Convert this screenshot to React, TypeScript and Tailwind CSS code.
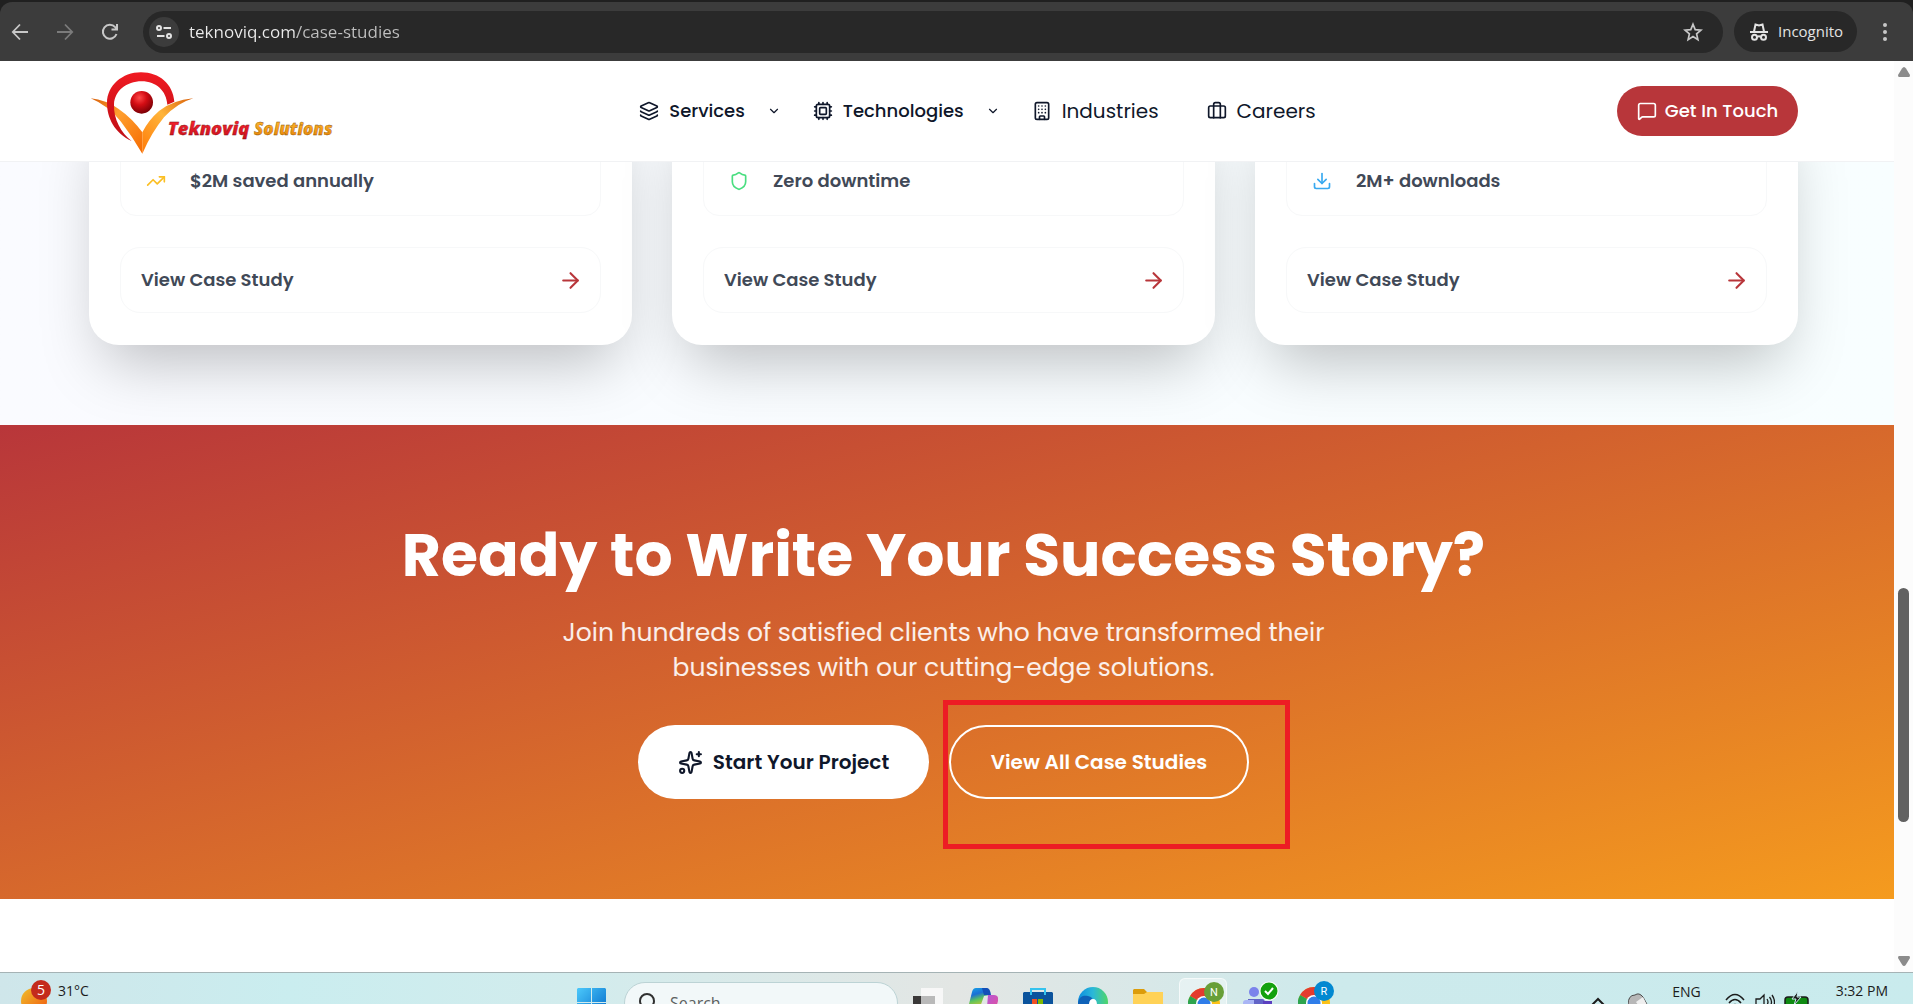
import type { ReactNode } from "react";
import {
  ArrowRight,
  Briefcase,
  Building,
  ChevronDown,
  Cpu,
  Download,
  Layers,
  MessageSquare,
  Shield,
  Sparkles,
  TrendingUp,
  type LucideIcon,
} from "lucide-react";

function BrowserBar() {
  return (
    <div className="shrink-0 bg-[#202020] pt-[2px] font-['Open_Sans','Noto_Sans',sans-serif]">
      <div className="flex h-[59px] items-center rounded-t-xl bg-[#3c3c3c] text-[#c7c7c7]">
        <button aria-label="Back" className="ml-2 grid size-6 place-items-center">
          <svg width="18" height="18" viewBox="0 0 18 18" fill="none" stroke="currentColor" strokeWidth="1.800">
            <path d="M17 9H2M9 1.500L1.800 9L9 16.500" />
          </svg>
        </button>
        <button aria-label="Forward" className="ml-[21px] grid size-6 place-items-center text-[#7b7b7b]">
          <svg width="18" height="18" viewBox="0 0 18 18" fill="none" stroke="currentColor" strokeWidth="1.800">
            <path d="M1 9h15M9 1.500L16.200 9L9 16.500" />
          </svg>
        </button>
        <button aria-label="Reload" className="ml-[21px] grid size-6 place-items-center">
          <svg width="18" height="18" viewBox="0 0 18 18" fill="none" stroke="currentColor" strokeWidth="2">
            <path d="M15.500 11A7 7 0 1 1 14.200 4.200L16 6.200M16 1v5.500h-5.500" />
          </svg>
        </button>
        <div className="ml-[21px] flex h-[42px] flex-1 items-center rounded-full bg-[#282828] pr-5 pl-[6px]">
          <button aria-label="Site information" className="grid size-[30px] place-items-center rounded-full bg-[#3c3c3c] text-[#e3e3e3]">
            <svg width="16" height="16" viewBox="0 0 16 16" fill="none" stroke="currentColor" strokeWidth="2">
              <circle cx="3" cy="4" r="2" />
              <path d="M7.500 4H15M1 12h7.500" />
              <circle cx="13" cy="12" r="2" />
            </svg>
          </button>
          <input
            aria-label="Address"
            defaultValue="teknoviq.com/case-studies"
            className="ml-[10px] flex-1 bg-[linear-gradient(to_right,#ededed_108px,#c0c0c0_108px)] bg-clip-text text-[17px] text-transparent outline-none"
          />
          <button aria-label="Bookmark this page">
            <svg width="20" height="20" viewBox="0 0 20 20" fill="none" stroke="currentColor" strokeWidth="1.700">
              <path d="M10 2.200l2.200 5.400 5.800.5-4.400 3.800 1.300 5.700L10 14.600l-4.900 3 1.300-5.700L2 8.100l5.800-.5z" />
            </svg>
          </button>
        </div>
        <div className="ml-[11px] flex h-[41px] w-[123px] items-center gap-[10px] rounded-full bg-[#282828] pl-4 text-[15px] text-[#e3e3e3]">
          <svg width="18" height="18" viewBox="0 0 18 18" fill="none" stroke="currentColor" strokeWidth="2">
            <path d="M0 9h18M4 8.500l1.500-7 3.500 1 3.500-1 1.500 7M7 14q2-1.500 4 0" />
            <circle cx="4.500" cy="14.300" r="2.500" />
            <circle cx="13.500" cy="14.300" r="2.500" />
          </svg>
          Incognito
        </div>
        <button aria-label="Browser menu" className="mr-[18px] ml-[18px] grid size-5 place-items-center">
          <svg width="4" height="18" viewBox="0 0 4 18" fill="currentColor">
            <circle cx="2" cy="2" r="2" />
            <circle cx="2" cy="9" r="2" />
            <circle cx="2" cy="16" r="2" />
          </svg>
        </button>
      </div>
    </div>
  );
}

function Logo() {
  return (
    <svg width="245" height="85" viewBox="30 26 735 255" role="img" aria-label="Teknoviq Solutions">
      <defs>
        <linearGradient id="ring" x1="0" y1="0" x2="0" y2="1">
          <stop offset="0" stopColor="#f01a22" />
          <stop offset="0.6" stopColor="#cf1219" />
          <stop offset="1" stopColor="#c01018" />
        </linearGradient>
        <linearGradient id="wing" x1="0" y1="0" x2="1" y2="1">
          <stop offset="0" stopColor="#d9600a" />
          <stop offset="0.4" stopColor="#ffa030" />
          <stop offset="1" stopColor="#f56a00" />
        </linearGradient>
        <linearGradient id="wingRight" x1="1" y1="0" x2="0" y2="1">
          <stop offset="0" stopColor="#d9600a" />
          <stop offset="0.45" stopColor="#ffb53a" />
          <stop offset="1" stopColor="#ff7a08" />
        </linearGradient>
        <radialGradient id="ball" cx="0.4" cy="0.3" r="0.7">
          <stop offset="0" stopColor="#ff4a4a" />
          <stop offset="0.45" stopColor="#d40d14" />
          <stop offset="1" stopColor="#7c0006" />
        </radialGradient>
        <linearGradient id="redText" x1="0" y1="0" x2="0" y2="1">
          <stop offset="0.3" stopColor="#f3202c" />
          <stop offset="1" stopColor="#c4101c" />
        </linearGradient>
        <linearGradient id="goldText" x1="0" y1="0" x2="0" y2="1">
          <stop offset="0.2" stopColor="#ffb52a" />
          <stop offset="1" stopColor="#e07a00" />
        </linearGradient>
      </defs>
      <path d="M35 114Q80 119 118 145Q160 174 190 216V280Q160 228 126 184Q88 136 35 114Z" fill="url(#wing)" />
      <path d="M343 114Q280 120 240 152Q208 180 190 216V280Q218 216 255 171Q295 128 343 114Z" fill="url(#wingRight)" />
      <path d="M158 242C106 218 84 172 84 128C84 76 130 36 186 36C242 36 282 72 286 124L265 133C262 92 232 63 188 63C142 63 107 92 105 132C103 176 126 218 158 242Z" fill="url(#ring)" />
      <circle cx="188" cy="126" r="34" fill="url(#ball)" />
      <g fontFamily="'Open Sans', sans-serif" fontWeight="800" fontStyle="italic">
        <text x="266" y="224" fontSize="55" fill="url(#redText)" stroke="#7a1016" strokeWidth="1">Teknoviq</text>
        <text x="525" y="224" fontSize="51" fill="url(#goldText)" stroke="#7d4808" strokeWidth="1">Solutions</text>
      </g>
    </svg>
  );
}

function MenuItem({ icon: Icon, label }: { icon: LucideIcon; label: string }) {
  return (
    <button className="flex items-center text-lg font-medium">
      <Icon size={20} className="mr-[10px]" />
      {label}
      <ChevronDown size={14} className="ml-[22px]" />
    </button>
  );
}

function SiteHeader() {
  return (
    <header className="relative z-10 border-b border-[#f1f2f4] bg-white pr-[7px]">
      <div className="mx-auto flex h-[100px] max-w-[1709px] items-center justify-between text-[#0f172a]">
        <a href="#home"><Logo /></a>
        <nav className="ml-1 flex items-center gap-8">
          <MenuItem icon={Layers} label="Services" />
          <MenuItem icon={Cpu} label="Technologies" />
          <a href="#industries" className="flex items-center gap-[10px] text-xl">
            <Building size={20} />Industries
          </a>
          <a href="#careers" className="ml-4 flex items-center gap-[10px] text-xl">
            <Briefcase size={20} />Careers
          </a>
        </nav>
        <a href="#contact" className="flex h-[50px] w-[181px] items-center justify-center gap-2 rounded-full bg-[#b8363a] text-lg font-medium text-white">
          <MessageSquare size={20} />Get In Touch
        </a>
      </div>
    </header>
  );
}

const studies: { icon: LucideIcon; color: string; result: string }[] = [
  { icon: TrendingUp, color: "text-[#fbbf24]", result: "$2M saved annually" },
  { icon: Shield, color: "text-[#4ade80]", result: "Zero downtime" },
  { icon: Download, color: "text-[#38a9f0]", result: "2M+ downloads" },
];

function CaseStudies() {
  return (
    <section className="overflow-hidden bg-linear-to-r from-[#fafbff] to-[#f8feff] pr-[7px] pb-20">
      <div className="mx-auto -mt-16 grid max-w-[1709px] grid-cols-3 gap-10">
        {studies.map(({ icon: Icon, color, result }) => (
          <article key={result} className="rounded-[30px] bg-white px-[31px] pt-12 pb-8 text-lg font-semibold text-[#414957] shadow-[0_31px_62px_-15px_rgba(0,0,0,0.25)]">
            <div className="flex h-[70px] items-center gap-6 rounded-2xl border border-[#f7f8f9] px-[25px]">
              <Icon size={20} className={color} />
              {result}
            </div>
            <a href="#case-study" className="mt-[31px] flex h-[66px] items-center justify-between rounded-[20px] border border-[#f7f8f9] pr-[17px] pl-5">
              View Case Study
              <ArrowRight size={25} className="text-[#b8363a]" />
            </a>
          </article>
        ))}
      </div>
    </section>
  );
}

function CallToAction() {
  return (
    <section className="bg-linear-to-br/srgb from-[#b8363a] to-[#f59b1e] pt-[98px] pr-[7px] pb-[100px] text-center text-white">
      <h2 className="text-[60px] leading-[64px] font-bold">Ready to Write Your Success Story?</h2>
      <p className="mx-auto mt-7 max-w-[800px] text-[25px] leading-[35px] text-white/90">
        Join hundreds of satisfied clients who have transformed their businesses with our cutting-edge solutions.
      </p>
      <div className="mt-10 flex justify-center gap-5 text-xl font-semibold">
        <a href="#start" className="flex h-[74px] w-[291px] items-center justify-center gap-[10px] rounded-full bg-white text-[#0f172a]">
          <Sparkles size={25} />Start Your Project
        </a>
        <div className="relative">
          <a href="#all" className="flex h-[74px] w-[300px] items-center justify-center rounded-full border-2 border-white">
            View All Case Studies
          </a>
          <div className="pointer-events-none absolute -top-[25px] -left-[6px] h-[149px] w-[347px] border-5 border-[#ed1c24]" />
        </div>
      </div>
    </section>
  );
}

function Scrollbar() {
  return (
    <div className="flex w-[19px] shrink-0 flex-col items-center bg-[#fcfcfc] py-[6px]">
      <svg width="12" height="10" viewBox="0 0 12 10" fill="#8b8b8b"><path d="M6 0Q7 0 8 1.500L12 8Q12 10 11 10H1Q0 10 0 8L4 1.500Q5 0 6 0Z" /></svg>
      <div className="grow-[511]" />
      <div className="w-[11px] grow-[234] rounded-full bg-[#616161]" />
      <div className="grow-[134]" />
      <svg width="12" height="10" viewBox="0 0 12 10" fill="#8b8b8b"><path d="M6 10Q5 10 4 8.500L0 2Q0 0 1 0H11Q12 0 12 2L8 8.500Q7 10 6 10Z" /></svg>
    </div>
  );
}

function ChromeIcon({ letter, color }: { letter: string; color: string }) {
  return (
    <svg width="38" height="44" viewBox="0 0 38 44">
      <circle cx="16" cy="24" r="16" fill="#fbc116" />
      <path d="M16 24L2.100 16A16 16 0 0 1 29.900 16Z" fill="#e33b2e" />
      <path d="M16 24L2.100 16A16 16 0 0 0 16 40Z" fill="#2da44e" />
      <circle cx="16" cy="24" r="8" fill="#fff" />
      <circle cx="16" cy="24" r="6.500" fill="#2f7de9" />
      <circle cx="26" cy="12" r="10" fill={color} />
      <text x="26" y="16" textAnchor="middle" fontSize="11" fill="#fff" fontFamily="Roboto, sans-serif">{letter}</text>
    </svg>
  );
}

function TaskButton({ label, children }: { label: string; children: ReactNode }) {
  return <button aria-label={label} className="mt-[15px] shrink-0 self-start">{children}</button>;
}

function Taskbar() {
  return (
    <footer className="grid h-[32px] shrink-0 grid-cols-[1fr_auto_1fr] overflow-hidden border-t border-[#a5b3b5] bg-[#cfeaec] font-['Open_Sans','Noto_Sans',sans-serif] text-sm text-[#1b1b1b]">
      <div className="flex h-16 bg-linear-to-r from-[#cfe6ea] via-[#caedef] to-[#d2eced] pl-[21px]">
        <svg width="31" height="60" viewBox="0 0 31 60">
          <defs>
            <linearGradient id="sun" x1="0" y1="0" x2="1" y2="1">
              <stop offset="0" stopColor="#f0c02c" />
              <stop offset="1" stopColor="#f0540e" />
            </linearGradient>
          </defs>
          <circle cx="13" cy="28" r="13" fill="url(#sun)" />
          <circle cx="20" cy="17" r="10" fill="#c42b1c" />
          <text x="20" y="22" textAnchor="middle" fontSize="14" fill="#fff">5</text>
        </svg>
        <span className="mt-2 ml-[6px] leading-5">31°C</span>
      </div>
      <div className="flex h-16 bg-linear-to-r from-[#d2eced] via-[#e3e6e4] to-[#cdeaec]">
        <TaskButton label="Start">
          <svg width="29" height="29" viewBox="0 0 29 29">
            <defs>
              <linearGradient id="win" x1="0" y1="0" x2="1" y2="1">
                <stop offset="0" stopColor="#4cc9fb" />
                <stop offset="1" stopColor="#0067c8" />
              </linearGradient>
            </defs>
            <path fill="url(#win)" d="M1 0h13v14H0V1zM15 0h13l1 1v13H15zM0 15h14v14H0zM15 15h14v14H15z" />
          </svg>
        </TaskButton>
        <label className="mt-[9px] ml-[18px] flex h-[42px] w-[274px] items-center gap-[14px] rounded-full border border-[#bcd3d5] bg-[#f2f8f9] pl-[13px]">
          <svg width="18" height="20" viewBox="0 0 18 20" fill="none" stroke="#303030" strokeWidth="2"><circle cx="9" cy="8" r="7" /><path d="M4 13L0 18" /></svg>
          <input aria-label="Search" placeholder="Search" className="w-40 bg-transparent text-base outline-none placeholder:text-[#5c6060]" />
        </label>
        <div className="ml-[15px]">
          <TaskButton label="Task view">
            <svg width="30" height="28" viewBox="0 0 30 28"><path fill="#3a3838" d="M0 8h22v20H0z" /><path fill="#f7f7f7" d="M8 0h22v22H8z" /><path fill="#b9b9b9" d="M8 8h14v14H8z" /></svg>
          </TaskButton>
        </div>
        <div className="ml-[25px]">
          <TaskButton label="Copilot">
            <svg width="30" height="28" viewBox="0 0 30 28">
              <defs>
                <linearGradient id="copA" x1="0" y1="0" x2="0.300" y2="1"><stop offset="0" stopColor="#16a7e8" /><stop offset="0.35" stopColor="#1a6fd6" /><stop offset="0.6" stopColor="#5cc45b" /><stop offset="1" stopColor="#f2c52c" /></linearGradient>
                <linearGradient id="copB" x1="0" y1="0" x2="1" y2="1"><stop offset="0" stopColor="#a758e8" /><stop offset="1" stopColor="#f0508c" /></linearGradient>
              </defs>
              <path d="M8 0h10q3 0 4 7l-6 1-5 14H4Q-1 22 1 16L4 4Q5 0 8 0Z" fill="url(#copA)" />
              <path d="M14 0h5q3 0 4 7h-7Q15 4 14 0Z" fill="#134fb8" />
              <path d="M20 7h6q5 0 4 6l-3 11q-1 4-5 4h-9q5-1 6-9Z" fill="url(#copB)" />
            </svg>
          </TaskButton>
        </div>
        <div className="ml-[25px]">
          <TaskButton label="Store">
            <svg width="30" height="28" viewBox="0 0 30 28"><path d="M8 7V1h14v6" fill="none" stroke="#35c3ee" strokeWidth="2" /><path fill="#0b539c" d="M1 4h28l1 1v23H0V5z" /><path fill="#35c3ee" d="M7 4h2v3H7zM21 4h2v3h-2z" /><path fill="#f25022" d="M9 11h5v5H9z" /><path fill="#7fba00" d="M15 11h5v5h-5z" /></svg>
          </TaskButton>
        </div>
        <div className="-mt-px ml-[25px]">
          <TaskButton label="Edge">
            <svg width="30" height="30" viewBox="0 0 30 30">
              <defs><linearGradient id="edge"><stop offset="0" stopColor="#0c8ee0" /><stop offset="0.5" stopColor="#2bb8d8" /><stop offset="1" stopColor="#50d668" /></linearGradient></defs>
              <circle cx="15" cy="15" r="15" fill="url(#edge)" />
              <path d="M0 16C1 9 6 8 10 9q5 1 5 5-4 0-5 7l1 8Q1 26 0 16Z" fill="#0f62b8" />
              <path d="M11 18q0-6 4-6t4 6Z" fill="#fff" />
            </svg>
          </TaskButton>
        </div>
        <div className="ml-[25px]">
          <TaskButton label="File Explorer">
            <svg width="30" height="28" viewBox="0 0 30 28"><path fill="#dc9c0a" d="M0 2l1-1h10l3 3h15v6H0z" /><path fill="#ffd257" d="M0 6h11l3-2h16v24H0z" /></svg>
          </TaskButton>
        </div>
        <button aria-label="Chrome, profile N" className="mt-[5px] ml-4 h-12 w-12 rounded-md border border-white/60 bg-white/40 pl-2">
          <ChromeIcon letter="N" color="#689f38" />
        </button>
        <button aria-label="Teams" className="mt-[6px] ml-4 h-11">
          <svg width="36" height="44" viewBox="0 0 36 44">
            <circle cx="11" cy="13" r="5" fill="#7b83eb" />
            <path d="M5 20h14q3 0 3 4v14H5z" fill="#6264c7" />
            <path d="M0 24q0-3 3-3h8v17H0z" fill="#a9b5f5" />
            <path d="M20 22h9v14h-9z" fill="#5b3fc0" />
            <circle cx="26" cy="12" r="9.500" fill="#fff" />
            <circle cx="26" cy="12" r="8.500" fill="#13a10e" />
            <path d="M22 12l3 3 5-6" fill="none" stroke="#fff" strokeWidth="2" />
          </svg>
        </button>
        <button aria-label="Chrome, profile R" className="mt-[6px] ml-[19px] h-11">
          <ChromeIcon letter="R" color="#0288d1" />
        </button>
      </div>
      <div className="flex h-16 justify-end bg-linear-to-r from-[#cdeaec] to-[#c9ebed] pr-[25px]">
        <button aria-label="Show hidden icons" className="mt-5 h-4">
          <svg width="14" height="9" viewBox="0 0 14 9" fill="none" stroke="#1b1b1b" strokeWidth="2"><path d="M1 8l6-6 6 6" /></svg>
        </button>
        <svg className="mt-5 ml-[23px]" width="20" height="20" viewBox="0 0 20 20"><path d="M0 12Q0 2 7 2q4-3 8 2l5 9v6H0z" fill="#b7b7b7" stroke="#4a4a4a" strokeWidth="1" /><path d="M8 9l7-5 4 8-6 4z" fill="#efefef" /></svg>
        <span className="mt-[9px] ml-6 leading-5">ENG</span>
        <svg className="mt-5 ml-6" width="20" height="18" viewBox="0 0 20 18" fill="none" stroke="#1b1b1b" strokeWidth="1.500"><path d="M1 7q9-11 18 0M4 10q6-7 12 0M7 13q3-3 6 0" /></svg>
        <svg className="mt-5 ml-[10px]" width="20" height="18" viewBox="0 0 20 18" fill="none" stroke="#1b1b1b" strokeWidth="1.300"><path d="M1 6h4l4-4v14l-4-4H1zM12 6q2 3 0 6M14.500 4q4 5 0 10M17 2q5 7 0 14" /></svg>
        <svg className="mt-[18px] ml-[9px]" width="26" height="20" viewBox="0 0 26 20"><rect x="1" y="6" width="23" height="13" rx="3" fill="#0f8a12" stroke="#1b1b1b" strokeWidth="1.500" /><path d="M14 0L8 8h4l-2 6 7-8h-4z" fill="#1b1b1b" stroke="#c9ebed" strokeWidth="1" /></svg>
        <span className="mt-2 ml-[26px] leading-5">3:32 PM</span>
      </div>
    </footer>
  );
}

export default function App() {
  return (
    <div className="flex h-screen flex-col overflow-hidden bg-white">
      <BrowserBar />
      <div className="flex min-h-0 flex-1">
        <main className="min-w-0 flex-1 overflow-hidden font-['Poppins','Inter',sans-serif]">
          <SiteHeader />
          <CaseStudies />
          <CallToAction />
        </main>
        <Scrollbar />
      </div>
      <Taskbar />
    </div>
  );
}
